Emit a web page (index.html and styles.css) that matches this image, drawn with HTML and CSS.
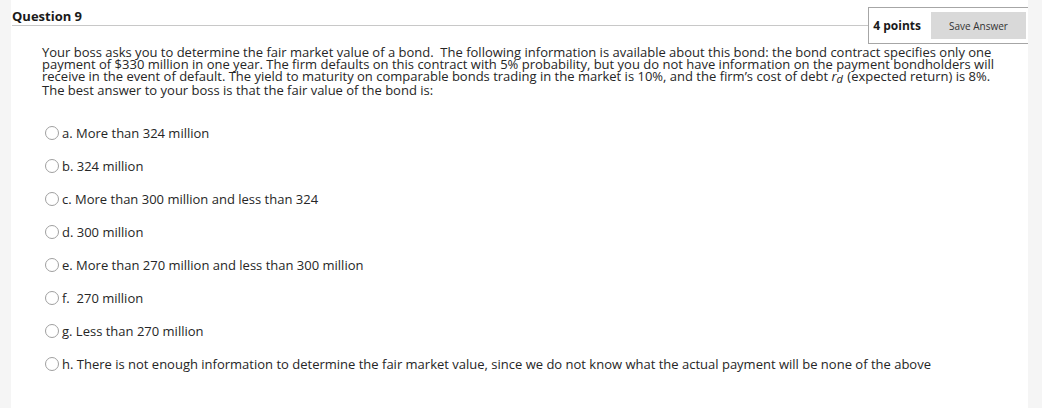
FILE: index.html
```html
<!DOCTYPE html>
<html>
<head>
<meta charset="utf-8">
<link rel="stylesheet" href="styles.css">
</head>
<body>
<div class="page">
  <div class="header">
    <div class="title-wrap"><h2 class="title">Question 9</h2></div>
    <div class="points-box">
      <span class="points">4 points</span>
      <button class="save">Save Answer</button>
    </div>
  </div>
  <div class="question">
    <p class="stem">Your boss asks you to determine the fair market value of a bond.&nbsp; The following information is available about this bond: the bond contract specifies only one payment of $330 million in one year. The firm defaults on this contract with 5% probability, but you do not have information on the payment bondholders will receive in the event of default. The yield to maturity on comparable bonds trading in the market is 10%, and the firm’s cost of debt <i>r<span class="sub">d</span></i> (expected return) is 8%.</p>
    <p class="ask">The best answer to your boss is that the fair value of the bond is:</p>
    <ul class="options">
      <li class="option"><span class="radio"></span><span>a. More than 324 million</span></li>
      <li class="option"><span class="radio"></span><span>b. 324 million</span></li>
      <li class="option"><span class="radio"></span><span>c. More than 300 million and less than 324</span></li>
      <li class="option"><span class="radio"></span><span>d. 300 million</span></li>
      <li class="option"><span class="radio"></span><span>e. More than 270 million and less than 300 million</span></li>
      <li class="option"><span class="radio"></span><span>f.&nbsp; 270 million</span></li>
      <li class="option"><span class="radio"></span><span>g. Less than 270 million</span></li>
      <li class="option"><span class="radio"></span><span>h. There is not enough information to determine the fair market value, since we do not know what the actual payment will be none of the above</span></li>
    </ul>
  </div>
</div>
</body>
</html>
```

FILE: styles.css
```css
html, body {
  margin: 0;
  padding: 0;
  background: #f5f5f5;
  font-family: "Open Sans", "Liberation Sans", sans-serif;
  color: #262626;
}
.page {
  background: #fff;
  margin: 0 14px 0 11px;
  height: 408px;
  overflow: hidden;
}
.header {
  display: flex;
  align-items: flex-start;
  padding-top: 7px;
  padding-left: 1px;
  margin-right: -2px;
}
.title-wrap {
  flex: 1;
  height: 18px;
  border-bottom: 1px solid #c8c8c8;
}
.title {
  margin: 0;
  font-size: 13px;
  font-weight: 700;
  line-height: 16px;
  color: #1a1a1a;
  position: relative;
  top: 1px;
}
.points-box {
  display: flex;
  align-items: center;
  border: 1px solid #a6a6a6;
  box-sizing: border-box;
  height: 37px;
  padding: 0 3px 0 4px;
  background: #fff;
}
.points {
  font-size: 12px;
  font-weight: 700;
  color: #1a1a1a;
  margin-right: 10px;
}
.save {
  font-family: "Open Sans", "Liberation Sans", sans-serif;
  font-size: 10px;
  color: #333;
  background: #d9d9d9;
  border: none;
  height: 27px;
  width: 95px;
  padding: 0;
}
.question {
  padding-left: 31px;
  padding-right: 26px;
}
.stem {
  margin: 2px 0 0 0;
  font-size: 13px;
  line-height: 12px;
}
.sub {
  font-size: 11px;
  position: relative;
  top: 2px;
  margin-right: 1px;
}
.ask {
  margin: 0;
  font-size: 13px;
  line-height: 14px;
}
.options {
  list-style: none;
  margin: 0;
  padding: 0;
  padding-top: 19px;
}
.option {
  display: flex;
  align-items: center;
  height: 33px;
  font-size: 13px;
  margin-left: 3px;
}
.radio {
  width: 12px;
  height: 12px;
  border: 1px solid #a0a0a0;
  border-radius: 50%;
  margin-right: 3px;
  flex: none;
  background: #fff;
}
```
